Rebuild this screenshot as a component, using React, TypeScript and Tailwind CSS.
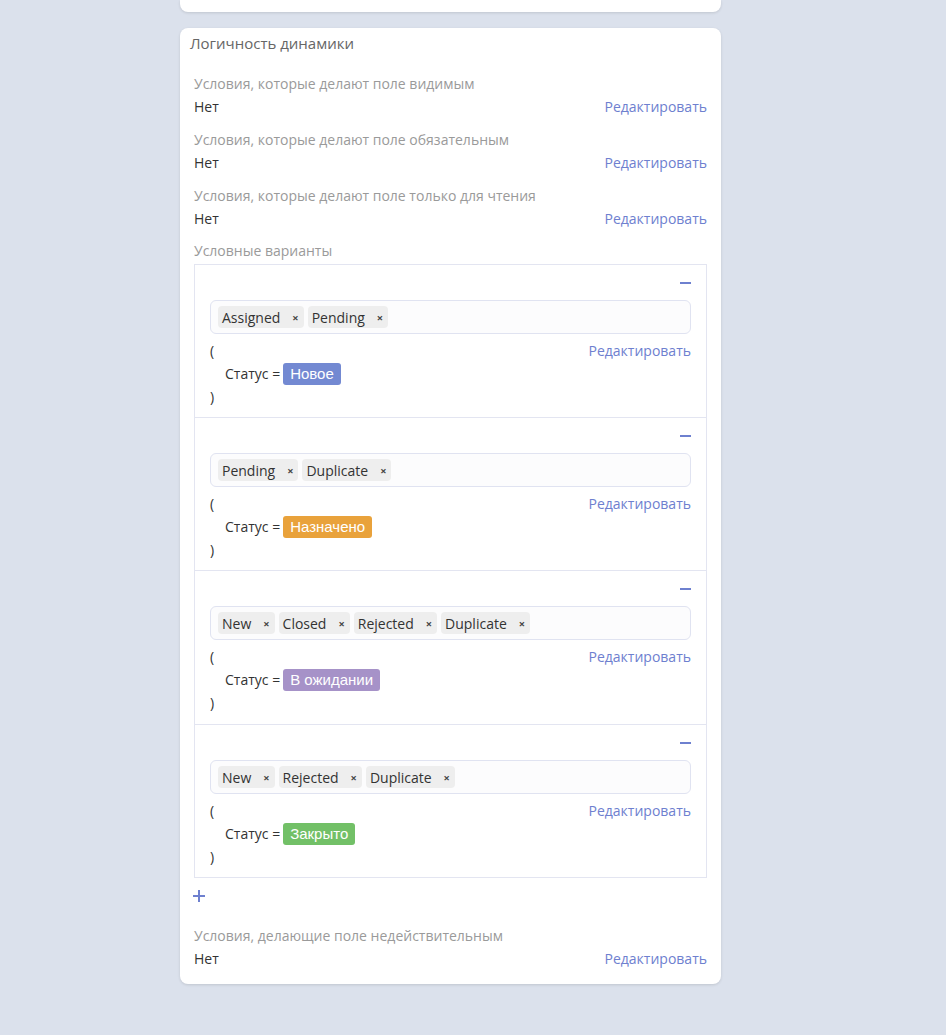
import React from "react";

const font = { fontFamily: '"Open Sans", "Liberation Sans", sans-serif' };

function Section({ label, className = "" }: { label: string; className?: string }) {
  return (
    <div className={className}>
      <div className="text-[14px] leading-[20px] text-[#9a9a9a]">{label}</div>
      <div className="mt-[2px] flex items-center justify-between text-[14px] leading-[22px]">
        <span className="text-[#333]">Нет</span>
        <span className="text-[#6e80cf]">Редактировать</span>
      </div>
    </div>
  );
}

function Chip({ text }: { text: string }) {
  return (
    <span className="flex h-[22px] items-center rounded-[4px] bg-[#eeeeee] pl-[4px] pr-[5px] text-[14px] text-[#333]">
      <span>{text}</span>
      <span className="ml-[12px] text-[11px] font-bold leading-none text-[#444]">×</span>
    </span>
  );
}

function Variant({
  tags,
  status,
  color,
  last,
  extra,
}: {
  tags: string[];
  status: string;
  color: string;
  last?: boolean;
  extra?: boolean;
}) {
  return (
    <div
      className={`px-[15px] pt-[10px] ${extra ? "pb-[10px]" : "pb-[9px]"} ${
        last ? "" : "border-b border-[#e3e5f1]"
      }`}
    >
      <div className="flex h-[16px] items-center justify-end">
        <span className="block h-[2px] w-[11px] bg-[#6e80cf]" />
      </div>
      <div className="mt-[9px] flex h-[34px] items-center gap-[4px] rounded-[6px] border border-[#e0e3f1] bg-[#fcfcfd] pl-[7px]">
        {tags.map((t) => (
          <Chip key={t} text={t} />
        ))}
      </div>
      <div className="mt-[5px] text-[14px] leading-[23px] text-[#333]">
        <div className="flex justify-between">
          <span>(</span>
          <span className="text-[#6e80cf]">Редактировать</span>
        </div>
        <div className="flex items-center pl-[15px]">
          <span>Статус =</span>
          <span
            className={`ml-[3px] flex h-[22px] items-center rounded-[3px] px-[7px] text-[15px] text-white ${color}`}
            style={{ fontFamily: '"Liberation Sans", Arial, sans-serif' }}
          >
            {status}
          </span>
        </div>
        <div>)</div>
      </div>
    </div>
  );
}

export default function App() {
  return (
    <div className="min-h-screen bg-[#dbe1ec] pb-[52px]" style={font}>
      <div className="w-[541px]" style={{ marginLeft: 180 }}>
        <div className="h-[12px] rounded-b-[8px] bg-white shadow-[0_1px_3px_rgba(0,0,0,0.12)]" />
        <div className="mt-[16px] rounded-[8px] bg-white pt-[5px] pb-[14px] shadow-[0_1px_3px_rgba(0,0,0,0.12)]">
          <div className="pl-[10px] text-[15px] leading-[20px] text-[#666]">Логичность динамики</div>
          <div className="pl-[14px] pr-[14px]">
            <Section className="mt-[21px]" label="Условия, которые делают поле видимым" />
            <Section className="mt-[12px]" label="Условия, которые делают поле обязательным" />
            <Section className="mt-[12px]" label="Условия, которые делают поле только для чтения" />
            <div className="mt-[11px] text-[14px] leading-[20px] text-[#9a9a9a]">Условные варианты</div>
            <div className="mt-[3px] border border-[#e3e5f1]">
              <Variant tags={["Assigned", "Pending"]} status="Новое" color="bg-[#7389d2]" />
              <Variant tags={["Pending", "Duplicate"]} status="Назначено" color="bg-[#e9a23b]" />
              <Variant
                tags={["New", "Closed", "Rejected", "Duplicate"]}
                status="В ожидании"
                color="bg-[#a692c8]"
                extra
              />
              <Variant tags={["New", "Rejected", "Duplicate"]} status="Закрыто" color="bg-[#72c067]" last />
            </div>
            <div className="mt-[10px] flex h-[16px] items-center">
              <svg width="12" height="12" viewBox="0 0 12 12" className="ml-[-1px]">
                <rect x="0" y="5" width="12" height="2" fill="#6e80cf" />
                <rect x="5" y="0" width="2" height="12" fill="#6e80cf" />
              </svg>
            </div>
            <Section className="mt-[22px]" label="Условия, делающие поле недействительным" />
          </div>
        </div>
      </div>
    </div>
  );
}
